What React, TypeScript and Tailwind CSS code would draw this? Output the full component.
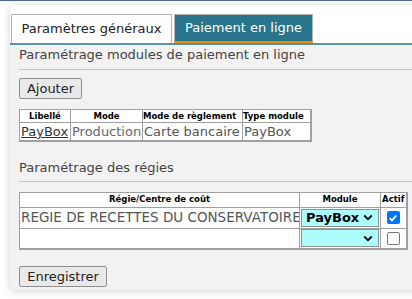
import React from "react";

const F = { fontFamily: '"DejaVu Sans", Verdana, sans-serif' };

function Chevron() {
  return (
    <svg width="10" height="7" viewBox="0 0 10 7" className="shrink-0">
      <path d="M1.2 1.5 L5 5.2 L8.8 1.5" fill="none" stroke="#111" strokeWidth="2" />
    </svg>
  );
}

export default function App() {
  return (
    <div className="w-[412px] h-[299px] bg-white overflow-hidden border-t border-[#4a6a93] text-[#444]" style={F}>
      <div className="ml-[10px] mt-[4px] w-[420px] h-[285px] bg-white rounded-[6px] shadow-[0_1px_8px_rgba(0,0,0,0.18)] flex flex-col">
        {/* tabs */}
        <div className="flex gap-[2px] pl-[1px] pt-[9px] h-[38px] shrink-0">
          <div className="w-[161px] h-[29px] bg-white border border-[#b5b5b5] border-b-0 flex items-center justify-center text-[13px] text-[#222]">
            Paramètres généraux
          </div>
          <div className="w-[139px] h-[29px] bg-[#28758c] border border-[#b5b5b5] border-b-[2px] border-b-[#f08a00] flex items-center justify-center text-[13px] text-white">
            Paiement en ligne
          </div>
        </div>
        {/* body */}
        <div className="flex-1 bg-[#f2f2f2] border-t-2 border-[#5a91a4] rounded-b-[6px] pl-[9px] flex flex-col">
          <div className="leading-[20px] text-[13px] pb-[4px] border-b border-[#c8c8c8] text-[#444]">
            Paramétrage modules de paiement en ligne
          </div>
          <div className="mt-[8px] flex">
            <button className="w-[63px] h-[21px] bg-[#e9e9e9] border border-[#8f8f8f] rounded-[2px] text-[13px] text-[#222] leading-none">
              Ajouter
            </button>
          </div>
          <table className="mt-[10px] w-[291px] border-collapse bg-white border-r-2 border-b-2 border-[#a0a0a0] table-fixed">
            <colgroup>
              <col className="w-[51px]" />
              <col className="w-[72px]" />
              <col className="w-[100px]" />
              <col className="w-[68px]" />
            </colgroup>
            <thead>
              <tr className="h-[13px]">
                <th className="border border-[#a0a0a0] text-[8.5px] font-bold text-black leading-none p-0">Libellé</th>
                <th className="border border-[#a0a0a0] text-[8.5px] font-bold text-black leading-none p-0">Mode</th>
                <th className="border border-[#a0a0a0] text-[8.5px] font-bold text-black leading-none p-0 text-left">Mode de règlement</th>
                <th className="border border-[#a0a0a0] text-[8.5px] font-bold text-black leading-none p-0 text-left">Type module</th>
              </tr>
            </thead>
            <tbody>
              <tr className="h-[18px]">
                <td className="border border-[#a0a0a0] text-[13px] leading-none p-0 pl-[1px] whitespace-nowrap overflow-hidden">
                  <span className="underline text-[#333]">PayBox</span>
                </td>
                <td className="border border-[#a0a0a0] text-[13px] leading-none p-0 pl-[1px] whitespace-nowrap overflow-hidden text-[#666]">Production</td>
                <td className="border border-[#a0a0a0] text-[13px] leading-none p-0 pl-[1px] whitespace-nowrap overflow-hidden text-[#555]">Carte bancaire</td>
                <td className="border border-[#a0a0a0] text-[13px] leading-none p-0 pl-[1px] whitespace-nowrap overflow-hidden text-[#555]">PayBox</td>
              </tr>
            </tbody>
          </table>
          <div className="mt-[16px] leading-[20px] text-[13px] pb-[3px] border-b border-[#c8c8c8] text-[#444]">
            Paramétrage des régies
          </div>
          <table className="mt-[10px] w-[387px] border-collapse bg-white border-r-2 border-b-2 border-[#a0a0a0] table-fixed">
            <colgroup>
              <col className="w-[280px]" />
              <col className="w-[81px]" />
              <col className="w-[26px]" />
            </colgroup>
            <thead>
              <tr className="h-[15px]">
                <th className="border border-[#a0a0a0] text-[8.5px] font-bold text-black leading-none p-0">Régie/Centre de coût</th>
                <th className="border border-[#a0a0a0] text-[8.5px] font-bold text-black leading-none p-0">Module</th>
                <th className="border border-[#a0a0a0] text-[8.5px] font-bold text-black leading-none p-0">Actif</th>
              </tr>
            </thead>
            <tbody>
              <tr className="h-[21px]">
                <td className="border border-[#a0a0a0] text-[13.5px] leading-none p-0 pl-[1px] whitespace-nowrap overflow-hidden text-[#555]">
                  REGIE DE RECETTES DU CONSERVATOIRE
                </td>
                <td className="border border-[#a0a0a0] p-0 px-[1px]">
                  <div className="h-[18px] bg-[#adfdfd] border border-[#8f8f8f] flex items-center justify-between pl-[4px] pr-[5px]">
                    <span className="text-[13px] font-bold text-black leading-none">PayBox</span>
                    <Chevron />
                  </div>
                </td>
                <td className="border border-[#a0a0a0] p-0">
                  <div className="flex justify-center">
                    <div className="w-[13px] h-[13px] rounded-[2px] bg-[#0075ff] flex items-center justify-center">
                      <svg width="10" height="10" viewBox="0 0 10 10">
                        <path d="M1.8 5.2 L4 7.4 L8.3 2.5" fill="none" stroke="white" strokeWidth="1.8" />
                      </svg>
                    </div>
                  </div>
                </td>
              </tr>
              <tr className="h-[21px]">
                <td className="border border-[#a0a0a0] p-0"></td>
                <td className="border border-[#a0a0a0] p-0 px-[1px]">
                  <div className="h-[18px] bg-[#adfdfd] border border-[#8f8f8f] flex items-center justify-end pr-[5px]">
                    <Chevron />
                  </div>
                </td>
                <td className="border border-[#a0a0a0] p-0">
                  <div className="flex justify-center">
                    <div className="w-[13px] h-[13px] rounded-[2px] bg-white border border-[#767676]"></div>
                  </div>
                </td>
              </tr>
            </tbody>
          </table>
          <div className="mt-[16px] flex">
            <button className="w-[88px] h-[21px] bg-[#e9e9e9] border border-[#8f8f8f] rounded-[2px] text-[13px] text-[#222] leading-none">
              Enregistrer
            </button>
          </div>
        </div>
      </div>
    </div>
  );
}
